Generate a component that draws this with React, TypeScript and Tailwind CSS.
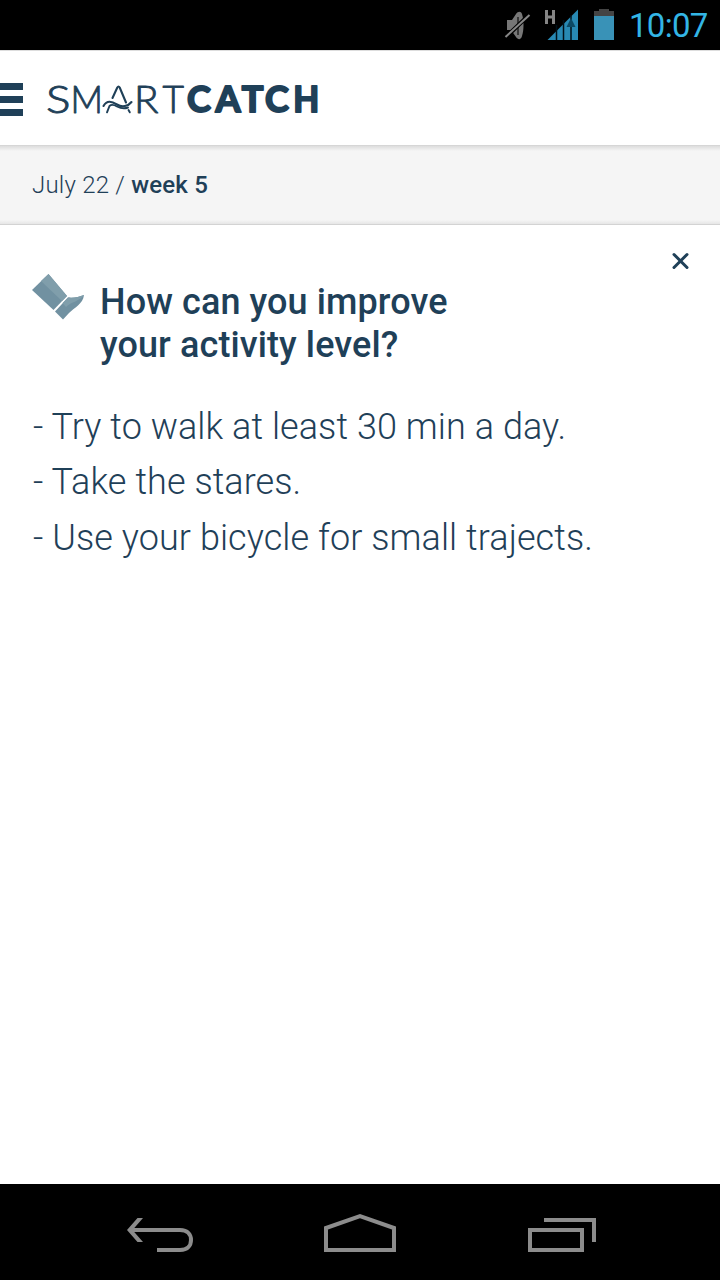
const tips = ["Try to walk at least 30 min a day.", "Take the stares.", "Use your bicycle for small trajects."];

function StatusBar() {
  return (
    <div className="flex h-[50px] shrink-0 items-center justify-end bg-black pr-[11px]">
      <svg width="120" height="50" viewBox="500 0 120 50">
        <path d="M507 20h5l4-6c2-3 5-3 6 0 2 6 2 16 0 22-1 4-4 4-6 1l-5-7h-4z" fill="#777" />
        <path d="M518 17v18" stroke="#222" strokeWidth="1.500" />
        <path d="M504 39L531 13" stroke="#000" strokeWidth="4" />
        <path d="M505.500 37L529.500 15" stroke="#888" strokeWidth="2" />
        <path d="M546.500 10v14M553.500 10v14M546.500 17h7" stroke="#858585" strokeWidth="3" fill="none" />
        <path d="M547.500 40L578 9.500V40z" fill="#2889b3" />
        <path d="M556.500 25v15M563.500 20v20M571 15v25" stroke="#001018" strokeWidth="1.500" />
        <path d="M571 18l4.500 9h-9z" fill="#0c4964" />
        <path d="M594 11h5V9h10v2h5v5h-20z" fill="#444" />
        <path d="M594 16h20v24h-20z" fill="#3992b7" />
      </svg>
      <span className="ml-[9px] w-20 pt-[2px] text-[33px] leading-[48px] tracking-[-0.700px] whitespace-nowrap text-[#33b5e5]">10:07</span>
    </div>
  );
}

function Logo() {
  return (
    <svg width="290" height="60" viewBox="44 70 290 60" role="img" aria-label="SmartCatch" className="font-[Lato]" fill="#1f4058">
      <g fontSize="37" fontWeight="300" stroke="#1f4058" strokeWidth="0.900" strokeLinejoin="round">
        <text x="46" y="112.800" textLength="24.500" lengthAdjust="spacingAndGlyphs">S</text>
        <text x="70.500" y="112.800" textLength="32.500" lengthAdjust="spacingAndGlyphs">M</text>
        <text x="134" y="112.800" textLength="24.500" lengthAdjust="spacingAndGlyphs">R</text>
        <text x="162.500" y="112.800" textLength="21.500" lengthAdjust="spacingAndGlyphs">T</text>
      </g>
      <g fill="none" stroke="#1f4058" strokeWidth="2.100" strokeLinecap="round">
        <path d="M112.500 98L117.300 87.500Q118.500 85.500 119.700 87.500L126 102.500" />
        <path d="M103.500 106C107 99.500 112 101.500 117 104.500S128 106.500 131.500 102" />
        <path d="M107 112.300L109.500 106Q112 103.500 117 106.500Q123 109.500 128 107.500M128.500 110L129.800 112.300" strokeWidth="1.900" />
      </g>
      <g fontSize="36" fontWeight="700" stroke="#1f4058" strokeWidth="2" strokeLinejoin="round">
        <text x="187" y="112.300">C</text>
        <text x="215.500" y="112.300">A</text>
        <text x="241.800" y="112.300">T</text>
        <text x="265" y="112.300">C</text>
        <text x="293.200" y="112.300" textLength="26" lengthAdjust="spacingAndGlyphs">H</text>
      </g>
    </svg>
  );
}

function NavBar() {
  return (
    <nav className="flex h-24 shrink-0 bg-black">
      <svg width="720" height="96" viewBox="0 1184 720 96" fill="none" stroke="#8c8c8c" strokeWidth="4">
        <path d="M130 1230H180C188 1230 191 1235 191 1240S188 1250 180 1250H157" />
        <path d="M137.500 1218h5.500l-10.500 12 10.500 12h-5.500l-10.500-12z" fill="#8c8c8c" stroke="none" />
        <path d="M326 1250V1228L360 1216L394 1228V1250Z" />
        <path d="M530 1230h52v20h-52zM544 1220h50v22" />
      </svg>
    </nav>
  );
}

export default function App() {
  return (
    <div className="flex h-[1280px] w-[720px] flex-col overflow-hidden bg-white font-[Roboto,sans-serif] text-[#1f4058]">
      <StatusBar />
      <header className="flex h-[95px] shrink-0 items-center border-t border-[#ddd] bg-white pt-[3px]">
        <button className="mr-[21px] flex w-[23px] flex-col gap-1.5" aria-label="Menu">
          <span className="h-[7px] w-full bg-[#1f4058]" />
          <span className="h-[7px] w-full bg-[#1f4058]" />
          <span className="h-[7px] w-full bg-[#1f4058]" />
        </button>
        <Logo />
      </header>
      <div className="flex h-20 shrink-0 items-center border-t border-b border-t-[#d6d6d6] border-b-[#d3d3d3] bg-[#f5f5f5] bg-[linear-gradient(to_bottom,#dddddd_0px,#f5f5f5_5px,#f5f5f5_74px,#e6e6e6_78px)] pl-8 text-2xl font-light">
        <p className="tracking-[0.220px] whitespace-pre">July 22 / <span className="font-medium">week 5</span></p>
      </div>
      <main className="flex min-h-0 flex-1 flex-col px-8">
        <div className="flex h-14 shrink-0 items-start justify-end pt-[27px]">
          <svg className="-mr-px" width="19" height="19" viewBox="0 0 19 19" stroke="#1f4058" strokeWidth="3" strokeLinecap="round">
            <path d="M4 2.500L17 15.500M17 2.500L4 15.500" />
          </svg>
        </div>
        <div className="flex">
          <svg className="-mt-2 mr-[15px] shrink-0" width="53" height="48" viewBox="32 273 53 48">
            <path d="M48.500 274L67 296L53.500 310L32 290z" fill="#7191a1" />
            <path d="M48.500 274L67 296L62 301L41 281z" fill="#809eab" />
            <path d="M68 297.500C74 298 79 297 84 295C83 304 74 308 69 313L63 319.500L55 311.500z" fill="#7191a1" />
            <path d="M68 297.500C74 298 79 297 84 295C80 301 71 302 66 307L62.500 303z" fill="#809eab" />
          </svg>
          <h1 className="text-[36px] leading-[43px] font-medium tracking-[0.100px]">How can you improve<br />your activity level?</h1>
        </div>
        <ul className="mt-[32.800px] pl-px text-[36px] leading-[55.500px] font-light tracking-[0.070px]">
          {tips.map((tip) => <li key={tip}>- {tip}</li>)}
        </ul>
      </main>
      <NavBar />
    </div>
  );
}
